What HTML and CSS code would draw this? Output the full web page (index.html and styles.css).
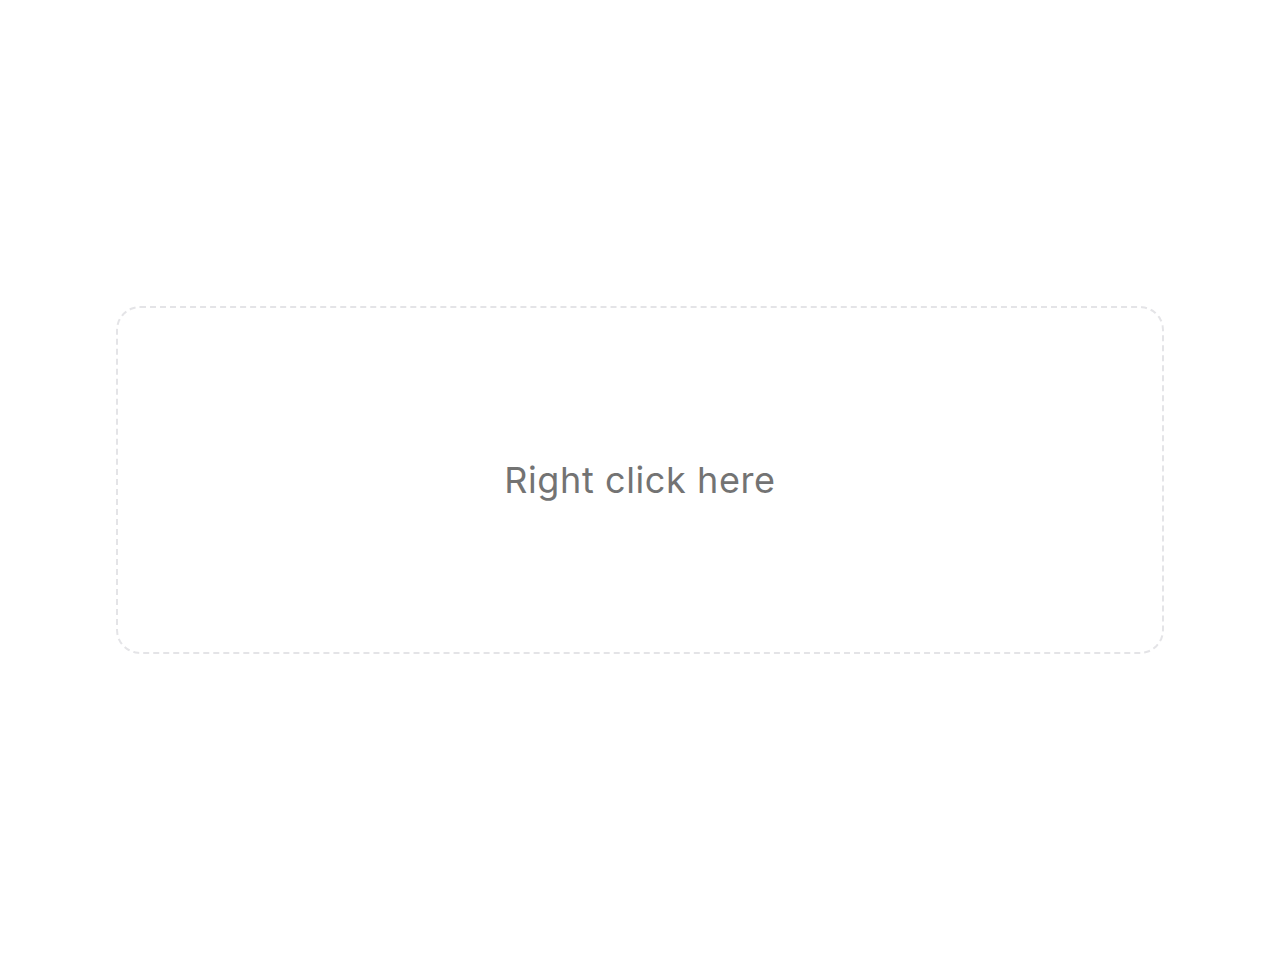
FILE: index.html
```html
<!DOCTYPE html>
<html>
<head>
<meta charset="utf-8">
<link rel="stylesheet" href="styles.css">
</head>
<body>
<main class="page">
  <div class="zone">
    <span class="label">Right click here</span>
  </div>
</main>
</body>
</html>
```
FILE: styles.css
```css
html, body {
  margin: 0;
  padding: 0;
  background: #ffffff;
}
.page {
  width: 1280px;
  height: 960px;
  display: flex;
  align-items: center;
  justify-content: center;
}
.zone {
  box-sizing: border-box;
  width: 1048px;
  height: 348px;
  border: 2px dashed #e4e4e7;
  border-radius: 24px;
  display: flex;
  align-items: center;
  justify-content: center;
}
.label {
  font-family: Inter, "Noto Sans", sans-serif;
  font-size: 36px;
  letter-spacing: 0.6px;
  color: #737373;
  line-height: 1;
}
```
